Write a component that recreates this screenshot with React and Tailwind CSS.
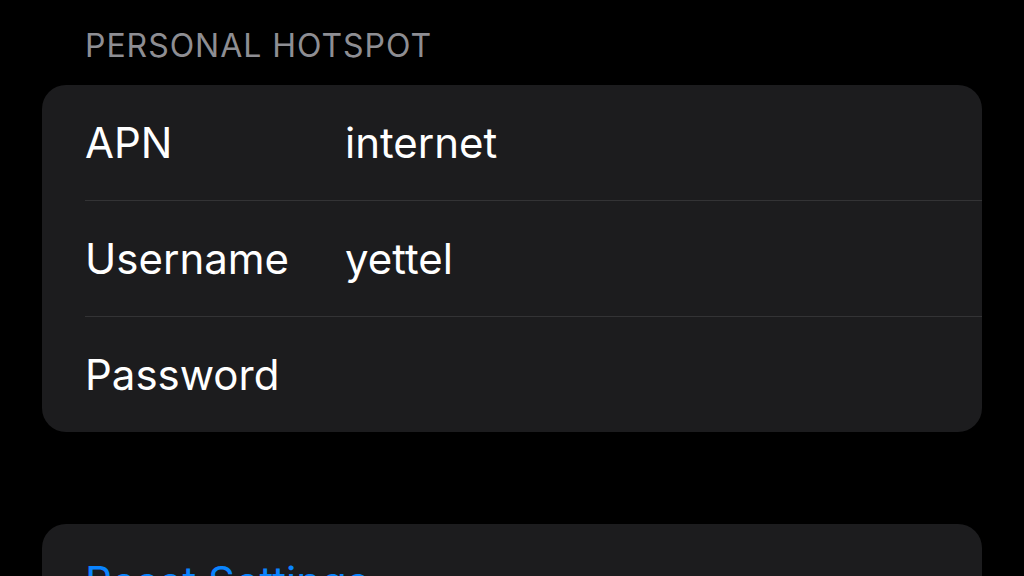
import React from "react";

const rows = [
  { label: "APN", value: "internet" },
  { label: "Username", value: "yettel" },
  { label: "Password", value: "" },
];

export default function App() {
  return (
    <div
      className="w-[1024px] h-[576px] overflow-hidden bg-black px-[42px]"
      style={{ fontFamily: "Inter, 'Noto Sans', sans-serif" }}
    >
      {/* section header */}
      <div className="pt-[30px] pl-[43px] text-[32px] leading-[32px] text-[#8e8e93] tracking-[0.03em]">
        PERSONAL HOTSPOT
      </div>

      {/* settings card */}
      <div className="mt-[23px] bg-[#1c1c1e] rounded-[24px] overflow-hidden">
        {rows.map((row, idx) => (
          <div key={row.label}>
            {idx > 0 && <div className="ml-[43px] h-px bg-[#333335]" />}
            <div className="h-[115px] flex items-center pl-[43px] text-[42px] text-white">
              <span className="w-[260px] shrink-0">{row.label}</span>
              <span>{row.value}</span>
            </div>
          </div>
        ))}
      </div>

      {/* reset card */}
      <div className="mt-[92px] bg-[#1c1c1e] rounded-[24px] overflow-hidden">
        <div className="h-[115px] flex items-center pl-[43px] text-[42px] text-[#0a84ff]">
          Reset Settings
        </div>
      </div>
    </div>
  );
}
